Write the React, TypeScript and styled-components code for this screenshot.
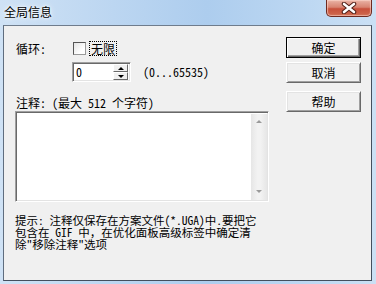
import React from "react";
import styled, { createGlobalStyle } from "styled-components";

const GlobalStyle = createGlobalStyle`
  html, body {
    margin: 0;
    padding: 0;
  }
  body {
    width: 376px;
    height: 284px;
    overflow: hidden;
    font-family: "Noto Sans Mono CJK SC", "Noto Sans CJK SC", sans-serif;
    font-size: 12px;
    color: #000;
  }
`;

const Window = styled.div`
  width: 376px;
  height: 284px;
  box-sizing: border-box;
  display: flex;
  flex-direction: column;
  padding: 0 4px 3px 3px;
  background: linear-gradient(90deg, #cfe2f5 0%, #bcd6f1 30%, #adcdee 55%, #bcd7f2 80%, #cbe0f4 100%);
`;

const TitleBar = styled.div`
  height: 25px;
  flex: none;
  display: flex;
  justify-content: space-between;
  align-items: flex-start;
`;

const Title = styled.div`
  margin: 6px 0 0 1px;
  line-height: 12px;
  text-shadow: 0 0 6px #fff, 0 0 3px #fff;
`;

const CloseButton = styled.div`
  width: 46px;
  height: 17px;
  box-sizing: border-box;
  display: flex;
  align-items: center;
  justify-content: center;
  border: 1px solid #6e2a20;
  border-top: none;
  border-radius: 0 0 5px 5px;
  background: linear-gradient(180deg, #eab3a6 0%, #d88471 45%, #c7503b 55%, #cf6a4f 100%);
  box-shadow: inset 0 0 1px 1px rgba(255, 220, 210, 0.6);
`;

const Client = styled.div`
  flex: 1;
  display: flex;
  background: #f0f0f0;
  border: 1px solid;
  border-color: #6f7c8c #434f5e #434f5e #5f6d7e;
`;

const LeftPane = styled.div`
  flex: 1;
  display: flex;
  flex-direction: column;
  padding-left: 11px;
`;

const Row = styled.div<{ $top: number; $indent?: number }>`
  display: flex;
  align-items: center;
  margin-top: ${(p) => p.$top}px;
  margin-left: ${(p) => p.$indent ?? 0}px;
`;

const FieldLabel = styled.div`
  width: 58px;
  padding-left: 1px;
  box-sizing: border-box;
  line-height: 13px;
`;

const CheckBox = styled.div`
  width: 13px;
  height: 13px;
  box-sizing: border-box;
  border: 1px solid;
  border-color: #555 #9a9a9a #9a9a9a #555;
  background: linear-gradient(135deg, #e4e4e4 0%, #ffffff 70%);
`;

const FocusLabel = styled.div`
  margin-left: 3px;
  padding: 0 1px;
  line-height: 13px;
  border: 1px dotted #000;
`;

const SpinBox = styled.div`
  width: 59px;
  height: 20px;
  box-sizing: border-box;
  display: flex;
  border: 1px solid;
  border-color: #a0a0a0 #fff #fff #a0a0a0;
  box-shadow: inset 1px 1px 0 #696969, inset -1px -1px 0 #e3e3e3;
  background: #fff;
  padding: 1px 2px 1px 1px;
`;

const SpinValue = styled.div`
  flex: 1;
  padding-left: 2px;
  line-height: 16px;
`;

const SpinButtons = styled.div`
  width: 15px;
  display: flex;
  flex-direction: column;
`;

const SpinButton = styled.div`
  flex: 1;
  display: flex;
  align-items: center;
  justify-content: center;
  box-sizing: border-box;
  background: #f0f0f0;
  border: 1px solid;
  border-color: #fff #696969 #696969 #fff;
`;

const Arrow = styled.div<{ $down?: boolean; $color?: string }>`
  width: 0;
  height: 0;
  border-left: 3px solid transparent;
  border-right: 3px solid transparent;
  ${(p) =>
    p.$down
      ? `border-top: 3px solid ${p.$color ?? "#000"};`
      : `border-bottom: 3px solid ${p.$color ?? "#000"};`}
`;

const RangeText = styled.div`
  margin-left: 12px;
  line-height: 12px;
`;

const Caption = styled.div<{ $top: number }>`
  margin-top: ${(p) => p.$top}px;
  padding-left: 1px;
  line-height: 12px;
`;

const MemoBox = styled.div`
  margin-top: 2px;
  width: 254px;
  height: 91px;
  box-sizing: border-box;
  display: flex;
  border: 1px solid;
  border-color: #a0a0a0 #fff #fff #a0a0a0;
  box-shadow: inset 1px 1px 0 #696969, inset -1px -1px 0 #e3e3e3;
  background: #fff;
  padding: 2px 1px 1px 2px;
`;

const MemoText = styled.div`
  flex: 1;
`;

const ScrollBar = styled.div`
  width: 16px;
  display: flex;
  flex-direction: column;
  justify-content: space-between;
  align-items: center;
  padding: 6px 0 7px;
  background: linear-gradient(90deg, #e6e6e6 0%, #f2f2f2 40%, #f2f2f2 60%, #e6e6e6 100%);
`;

const Hint = styled.div`
  margin-top: 12px;
  display: flex;
  flex-direction: column;
  white-space: nowrap;
`;

const HintLine = styled.div`
  height: 12px;
  font-size: 11.5px;
  line-height: 12px;
`;

const RightPane = styled.div`
  width: 75px;
  margin-right: 10px;
  display: flex;
  flex-direction: column;
`;

const Button = styled.div<{ $top: number; $default?: boolean }>`
  margin-top: ${(p) => p.$top}px;
  height: 21px;
  box-sizing: border-box;
  display: flex;
  align-items: center;
  justify-content: center;
  background: #f0f0f0;
  border: 1px solid;
  border-color: ${(p) => (p.$default ? "#000" : "#fff #696969 #696969 #fff")};
  box-shadow: ${(p) =>
    p.$default
      ? "inset 1px 1px 0 #fff, inset -1px -1px 0 #696969, inset -2px -2px 0 #a0a0a0"
      : "inset 1px 1px 0 #e3e3e3, inset -1px -1px 0 #a0a0a0"};
  line-height: 12px;
`;

const CloseGlyph: React.FC = () => (
  <svg width="18" height="12" viewBox="0 0 18 12">
    <path d="M4 2 L14 10 M14 2 L4 10" stroke="#4d1c14" strokeWidth="4.5" strokeLinecap="round" />
    <path d="M4 2 L14 10 M14 2 L4 10" stroke="#fff" strokeWidth="2.6" strokeLinecap="round" />
  </svg>
);

const App: React.FC = () => {
  return (
    <>
      <GlobalStyle />
      <Window>
        <TitleBar>
          <Title>全局信息</Title>
          <CloseButton>
            <CloseGlyph />
          </CloseButton>
        </TitleBar>
        <Client>
          <LeftPane>
            <Row $top={15}>
              <FieldLabel>循环:</FieldLabel>
              <CheckBox />
              <FocusLabel>无限</FocusLabel>
            </Row>
            <Row $top={6} $indent={57}>
              <SpinBox>
                <SpinValue>0</SpinValue>
                <SpinButtons>
                  <SpinButton>
                    <Arrow />
                  </SpinButton>
                  <SpinButton>
                    <Arrow $down />
                  </SpinButton>
                </SpinButtons>
              </SpinBox>
              <RangeText>(0...65535)</RangeText>
            </Row>
            <Caption $top={15}>注释: (最大 512 个字符)</Caption>
            <MemoBox>
              <MemoText />
              <ScrollBar>
                <Arrow $color="#9a9a9a" />
                <Arrow $down $color="#9a9a9a" />
              </ScrollBar>
            </MemoBox>
            <Hint>
              <HintLine>提示: 注释仅保存在方案文件(*.UGA)中.要把它</HintLine>
              <HintLine>包含在 GIF 中，在优化面板高级标签中确定清</HintLine>
              <HintLine>除"移除注释"选项</HintLine>
            </Hint>
          </LeftPane>
          <RightPane>
            <Button $top={11} $default>确定</Button>
            <Button $top={4}>取消</Button>
            <Button $top={8}>帮助</Button>
          </RightPane>
        </Client>
      </Window>
    </>
  );
};

export default App;
